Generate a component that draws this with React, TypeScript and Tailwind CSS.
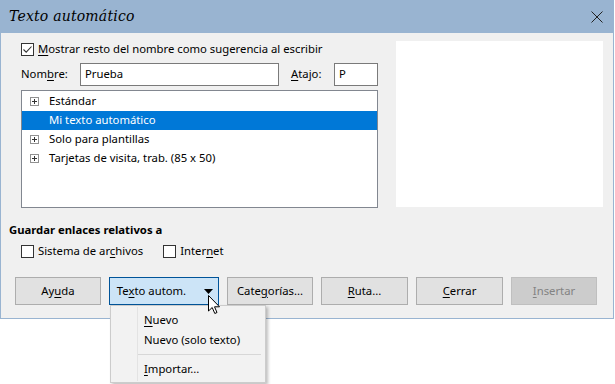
import React from "react";

const U = ({ children }: { children: React.ReactNode }) => <span className="underline underline-offset-2">{children}</span>;

function Check({ checked = false }: { checked?: boolean }) {
  return (
    <span className="w-[13px] h-[13px] border border-[#333] bg-white flex items-center justify-center shrink-0">
      {checked && (
        <svg width="11" height="11" viewBox="0 0 11 11">
          <path d="M1.5 5.5 L4.2 8.2 L9.5 2.5" fill="none" stroke="#333" strokeWidth="1.1" />
        </svg>
      )}
    </span>
  );
}

function Plus() {
  return (
    <span className="w-[9px] h-[9px] border border-[#919191] bg-white flex items-center justify-center shrink-0">
      <svg width="7" height="7" viewBox="0 0 7 7">
        <path d="M1 3.5 H6 M3.5 1 V6" stroke="#333" strokeWidth="1" />
      </svg>
    </span>
  );
}

function Btn({ children, w = "w-[86px]", kind = "normal" }: { children: React.ReactNode; w?: string; kind?: "normal" | "active" | "disabled" }) {
  const style =
    kind === "active"
      ? "bg-[#cce4f7] border-[#005499] text-black"
      : kind === "disabled"
      ? "bg-[#cccccc] border-[#bfbfbf] text-[#838383]"
      : "bg-[#e1e1e1] border-[#adadad] text-black";
  return (
    <div className={`${w} h-[28px] border flex items-center justify-center shrink-0 ${style}`}>{children}</div>
  );
}

const rows = [
  { label: "Estándar", plus: true },
  { label: "Mi texto automático", plus: false, sel: true },
  { label: "Solo para plantillas", plus: true },
  { label: "Tarjetas de visita, trab. (85 x 50)", plus: true },
];

export default function App() {
  return (
    <div className="relative w-[615px] h-[384px] bg-white overflow-hidden text-[11.3px] text-black" style={{ fontFamily: '"Noto Sans", sans-serif' }}>
      <div className="w-[614px] h-[319px] border-x border-b border-[#99b4d1] bg-[#f0f0f0] flex flex-col">
        {/* title bar */}
        <div className="h-[33px] bg-[#99b4d1] flex items-center justify-between pl-[8px] pr-[10px] shrink-0">
          <span className="italic text-[14px] tracking-[0.2px]" style={{ fontFamily: '"DejaVu Serif", serif' }}>Texto automático</span>
          <svg width="12" height="12" viewBox="0 0 12 12">
            <path d="M0.5 0.5 L11.5 11.5 M11.5 0.5 L0.5 11.5" stroke="#222" strokeWidth="1" />
          </svg>
        </div>

        {/* body */}
        <div className="flex flex-col pt-[8px] pl-[20px]">
          <div className="flex">
            <div className="w-[357px] flex flex-col">
              <div className="h-[16px] flex items-center gap-[4px]">
                <Check checked />
                <span><U>M</U>ostrar resto del nombre como sugerencia al escribir</span>
              </div>
              <div className="h-[23px] mt-[6px] flex items-center">
                <span className="w-[59px]">Nom<U>b</U>re:</span>
                <div className="w-[199px] h-[23px] border border-[#7a7a7a] bg-white flex items-center px-[4px]">Prueba</div>
                <span className="ml-[12px] w-[43px]"><U>A</U>tajo:</span>
                <div className="w-[44px] h-[23px] border border-[#7a7a7a] bg-white flex items-center px-[4px]">P</div>
              </div>
              <div className="h-[118px] mt-[4px] border border-[#828790] bg-white pt-[1px]">
                {rows.map((r) => (
                  <div key={r.label} className={`h-[19px] flex items-center ${r.sel ? "bg-[#0078d7] text-white" : ""}`}>
                    <span className="w-[9px] ml-[8px] mr-[10px]">{r.plus && <Plus />}</span>
                    <span>{r.label}</span>
                  </div>
                ))}
              </div>
            </div>
            <div className="ml-[18px] w-[207px] h-[166px] bg-white" />
          </div>

          <div className="-ml-[12px] mt-[14px] h-[16px] flex items-center font-bold">Guardar enlaces relativos a</div>
          <div className="mt-[5px] h-[16px] flex items-center">
            <Check />
            <span className="ml-[4px]">Sistema de ar<U>c</U>hivos</span>
            <span className="ml-[20px]"><Check /></span>
            <span className="ml-[4px]">Inter<U>n</U>et</span>
          </div>

          <div className="-ml-[6px] mt-[18px] flex gap-[8px]">
            <Btn>Ay<U>u</U>da</Btn>
            <Btn w="w-[110px]" kind="active">
              <span className="ml-[2px]">Te<U>x</U>to autom.</span>
              <svg className="ml-[18px]" width="9" height="5" viewBox="0 0 9 5">
                <path d="M0 0 H9 L4.5 5 Z" fill="#000" />
              </svg>
            </Btn>
            <Btn>Cate<U>g</U>orías...</Btn>
            <Btn w="w-[87px]"><U>R</U>uta...</Btn>
            <Btn w="w-[87px]"><U>C</U>errar</Btn>
            <Btn kind="disabled"><U>I</U>nsertar</Btn>
          </div>
        </div>
      </div>

      {/* dropdown menu */}
      <div className="absolute left-[110px] top-[305px] w-[156px] h-[78px] bg-[#f2f2f2] border border-[#cccccc] shadow-[2px_2px_3px_rgba(0,0,0,0.25)]">
        <div className="absolute left-[26px] top-[1px] bottom-[1px] w-[1px] bg-[#e3e3e3]" />
        <div className="flex flex-col pl-[33px] pt-[4px]">
          <div className="h-[20px] flex items-center"><U>N</U>uevo</div>
          <div className="h-[20px] flex items-center">Nuevo (solo texto)</div>
          <div className="h-[9px] flex items-center -ml-[6px] mr-[4px]"><div className="w-full h-[1px] bg-[#d7d7d7]" /></div>
          <div className="h-[20px] flex items-center"><U>I</U>mportar...</div>
        </div>
      </div>

      {/* mouse cursor */}
      <svg className="absolute left-[208px] top-[295px]" width="14" height="21" viewBox="0 0 14 21">
        <path d="M0.5 0.5 L0.5 16 L4.2 12.5 L6.8 18.5 L9 17.5 L6.5 11.8 L11.5 11.8 Z" fill="#fff" stroke="#000" strokeWidth="1" strokeLinejoin="miter" />
      </svg>
    </div>
  );
}
